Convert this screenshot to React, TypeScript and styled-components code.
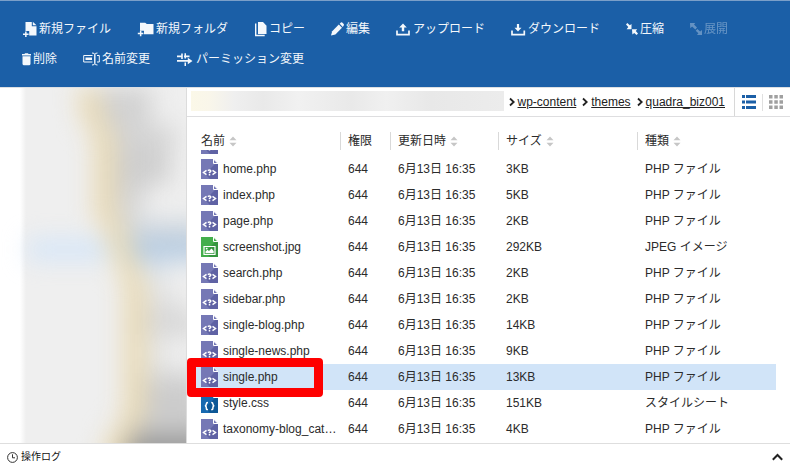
import React from "react";
import styled, { createGlobalStyle } from "styled-components";

const GlobalStyle = createGlobalStyle`
  * { box-sizing: border-box; }
  body {
    margin: 0;
    background: #fff;
    color: #2b2b2b;
    font-family: "Liberation Sans", "Noto Sans CJK JP", sans-serif;
    font-size: 12px;
    line-height: 18px;
  }
  button { font: inherit; color: inherit; background: none; border: 0; padding: 0; cursor: pointer; }
`;

const Page = styled.div`
  display: flex;
  flex-direction: column;
  height: 100vh;
  overflow: hidden;
`;

/* ---------- toolbar ---------- */

const Toolbar = styled.div`
  display: flex;
  flex-wrap: wrap;
  align-items: center;
  gap: 12px 26px;
  padding: 19px 22px;
  background: #1b5fa7;
  border-top: 1px solid #7b9fc9;
  color: #f4f8fc;
`;

const ToolButton = styled.button`
  display: flex;
  align-items: center;
  gap: 2px;
  height: 18px;
  white-space: nowrap;
  &:disabled { opacity: 0.32; color: #fff; cursor: default; }
`;

const ToolIcon = styled.svg`
  flex: none;
  display: block;
`;

type IconProps = { w: number; h?: number; children: React.ReactNode };
const Icon = ({ w, h = 16, children }: IconProps) => (
  <ToolIcon width={w} height={h} viewBox={`0 0 ${w} ${h}`} fill="currentColor" aria-hidden="true">
    {children}
  </ToolIcon>
);

const NewFileIcon = () => (
  <Icon w={15}>
    <path d="M3.500 1H9.800V5.200H14.500V14.500H7.200V10H3.500z" />
    <path d="M10.800.800 14.500 4.300H10.800z" />
    <path d="M3.100 10.500h1.500v2H6.600V14H4.600v2H3.100V14H1v-1.500h2.100z" />
  </Icon>
);
const NewFolderIcon = () => (
  <Icon w={17}>
    <path d="M3 1.700H8.200L9.800 3H16.500V13.300H7V9.800H3z" />
    <path d="M2.900 9.700h1.500v2H6.400v1.500h-2v2H2.900v-2H.800v-1.500h2.100z" />
  </Icon>
);
const CopyIcon = () => (
  <Icon w={13}>
    <path d="M4 1H9L12.500 4.700V13H4z" />
    <path d="M1.700 2.500v12h9" fill="none" stroke="currentColor" strokeWidth="1.400" />
  </Icon>
);
const EditIcon = () => (
  <Icon w={13}>
    <path d="M0 14.500 1.200 10.200 7.800 3.600 11 6.800 4.400 13.400z" />
    <path d="M8.700 2.800 9.900 1.600Q10.700 1 11.500 1.700L12.700 2.900Q13.300 3.700 12.700 4.500L11.800 5.900z" />
  </Icon>
);
const UploadIcon = () => (
  <Icon w={15}>
    <path d="M7 2.500 10.800 6.500H8.200V10.300H5.800V6.500H3.200z" />
    <path d="M1 9.500v4.200h12V9.500" fill="none" stroke="currentColor" strokeWidth="1.700" />
  </Icon>
);
const DownloadIcon = () => (
  <Icon w={15}>
    <path d="M7 10.500 10.500 6.800H8.100V3H5.900V6.800H3.500z" />
    <path d="M1 9.500v4.200h12.300V9.500" fill="none" stroke="currentColor" strokeWidth="1.700" />
  </Icon>
);
const CompressIcon = () => (
  <Icon w={12}>
    <path d="M0 3.500 1.300 2 3.800 4.200 5.500 3V8.200H.600L2.300 6z" />
    <path d="M6 8.200h5.200L9.800 10 12 12.600 10.600 14 8.200 12 6.400 13.600z" />
  </Icon>
);
const ExpandIcon = () => (
  <Icon w={12}>
    <path d="M0 2h5.200L4 3.600 7 6.500 5.300 8.400 2.100 5.500.300 7.300z" />
    <path d="M12 14H7l1.400-1.700-2.700-2.500 1.700-1.800 2.700 2.600L12 9z" />
  </Icon>
);
const TrashIcon = () => (
  <Icon w={9}>
    <path d="M3 2.200h3l.500.800H9v1.500H0V3h2.500z" />
    <path d="M.500 5.200h8V12.800Q8.400 14.300 7 14.300H2Q.600 14.300 .500 12.800z" />
  </Icon>
);
const RenameIcon = () => (
  <Icon w={17}>
    <path d="M9.500 4.500H.700v6.500h8.800M14 4.500h2.300v6.500H14" fill="none" stroke="currentColor" strokeWidth="1" />
    <path d="M2.500 6.500h6.500v2.500h-6.500z" />
    <path d="M9 2Q11.800 2 11.800 3.500v9Q11.800 14 9 14M14.500 2Q11.800 2 11.800 3.500v9Q11.800 14 14.500 14" fill="none" stroke="currentColor" strokeWidth="1" />
  </Icon>
);
const PermissionIcon = () => (
  <Icon w={18}>
    <path d="M1 4.600H5.200V2.500H6.800V8H5.200V6.200H1zM8 4.600H13.500V6.200H8zM8.500 2.200H10V7.500H8.500zM8.500 11.500H10V15H8.500z" />
    <path d="M1 9H11.800V6.800L16.500 10 11.800 13.300V10.800H1z" />
  </Icon>
);

const tools: { label: string; icon: React.ReactNode; disabled?: boolean }[] = [
  { label: "新規ファイル", icon: <NewFileIcon /> },
  { label: "新規フォルダ", icon: <NewFolderIcon /> },
  { label: "コピー", icon: <CopyIcon /> },
  { label: "編集", icon: <EditIcon /> },
  { label: "アップロード", icon: <UploadIcon /> },
  { label: "ダウンロード", icon: <DownloadIcon /> },
  { label: "圧縮", icon: <CompressIcon /> },
  { label: "展開", icon: <ExpandIcon />, disabled: true },
  { label: "削除", icon: <TrashIcon /> },
  { label: "名前変更", icon: <RenameIcon /> },
  { label: "パーミッション変更", icon: <PermissionIcon /> },
];

/* ---------- blurred folder tree ---------- */

const Body = styled.div`
  flex: 1;
  min-height: 0;
  display: flex;
  border-top: 1px solid #dcdfe3;
`;

const Sidebar = styled.aside`
  flex: none;
  width: 187px;
  padding-left: 20px;
  border-right: 1px solid #dcdcdc;
  overflow: hidden;
`;

const TreePanel = styled.div`
  height: 100%;
  background: linear-gradient(to right, #fff, #efefef 6px);
`;

const Tree = styled.div`
  width: 200px;
  filter: blur(12px);
`;

const TreeRow = styled.div<{ $indent: number; $active?: boolean }>`
  display: flex;
  height: 19px;
  padding-left: ${(p) => p.$indent}px;
  background: ${(p) =>
    p.$active ? "linear-gradient(to right, transparent 8px, #d3e5f9 8px)" : "transparent"};
`;

const TreeFolder = styled.span`
  width: 22px;
  background: #e9dab4;
`;

const TreeLabel = styled.span<{ $width: number; $tone: string }>`
  width: ${(p) => p.$width}px;
  background: ${(p) => p.$tone};
`;

const tree: { indent: number; width: number; tone: string; active?: boolean }[] = [
  { indent: 58, width: 52, tone: "#d0d0d0" },
  { indent: 62, width: 46, tone: "#d2d2d2" },
  { indent: 72, width: 62, tone: "#d4d4d4" },
  { indent: 74, width: 54, tone: "#d0d0d0" },
  { indent: 74, width: 54, tone: "#cdcdcd" },
  { indent: 74, width: 30, tone: "#d2d2d2" },
  { indent: 74, width: 24, tone: "#d6d6d6" },
  { indent: 84, width: 80, tone: "#cdd5dd" },
  { indent: 90, width: 80, tone: "#b2cae2", active: true },
  { indent: 98, width: 30, tone: "#dde3ea" },
  { indent: 104, width: 20, tone: "#e4e4e4" },
  { indent: 104, width: 36, tone: "#dddddd" },
  { indent: 104, width: 60, tone: "#d5d5d5" },
  { indent: 104, width: 20, tone: "#e4e4e4" },
  { indent: 104, width: 20, tone: "#e4e4e4" },
  { indent: 104, width: 60, tone: "#cfcfcf" },
  { indent: 104, width: 60, tone: "#cacaca" },
  { indent: 100, width: 70, tone: "#cfcfcf" },
  { indent: 88, width: 90, tone: "#a8a8a8" },
  { indent: 82, width: 90, tone: "#8c8c8c" },
];

/* ---------- main pane ---------- */

const Main = styled.main`
  flex: 1;
  min-width: 0;
  overflow: hidden;
`;

const PathBar = styled.div`
  display: flex;
  align-items: stretch;
  height: 29px;
  border-bottom: 1px solid #dedee0;
`;

const HiddenPath = styled.div`
  flex: 1;
  margin: 3px 0 5px 4px;
  background: linear-gradient(to right, #fbf8e8, #f9f6ea 18px, #efefef 44px, #e9e9e9 72px, #f1f1f1 108px, #e9e9e9 160px, #f0f0f0 195px, #e8e8e8 240px, #ececec);
`;

const Crumbs = styled.nav`
  display: flex;
  align-items: center;
  gap: 6px;
  padding: 0 9px 1px 5px;
`;

const Crumb = styled.span`
  display: flex;
  align-items: center;
  gap: 3px;
  a { color: #222; text-underline-offset: 1px; }
`;

const Views = styled.div`
  display: flex;
  align-items: center;
  border-left: 1px solid #d8d8d8;
  padding: 0 7px;
`;

const ViewButton = styled.button`
  display: flex;
  color: ${(p) => (p["aria-pressed"] ? "#1b5fa7" : "#a0a0a0")};
`;

const ViewDivider = styled.span`
  width: 1px;
  height: 17px;
  margin: 0 6px;
  background: #e0e0e0;
`;

/* ---------- file table ---------- */

const TableWrap = styled.div`
  padding: 15px 14px 0 0;
`;

const Table = styled.table`
  width: 100%;
  table-layout: fixed;
  border-collapse: separate;
  border-spacing: 0;
`;

const Col = styled.col<{ $w?: number }>`
  width: ${(p) => (p.$w ? `${p.$w}px` : "auto")};
`;

const Th = styled.th`
  height: 18px;
  padding: 0 0 0 7px;
  text-align: left;
  font-weight: 400;
  border-left: 1px solid #d9d9d9;
  &:first-child { padding-left: 14px; border-left: 0; }
`;

const SortButton = styled.button`
  display: flex;
  align-items: center;
  gap: 4px;
  height: 18px;
`;

const Row = styled.tr<{ $selected?: boolean }>`
  background: ${(p) => (p.$selected ? "#d1e4f8" : "transparent")};
`;

const Td = styled.td`
  height: 26px;
  padding: 0 0 0 8px;
  white-space: nowrap;
`;

const NameTd = styled(Td)`
  position: relative;
  padding-left: 14px;
`;

const Name = styled.span`
  display: flex;
  align-items: center;
  gap: 5px;
`;

const ClippedCell = styled.td`
  padding: 0 0 0 14px;
`;

const Clip = styled.div`
  display: flex;
  align-items: flex-end;
  height: 6px;
  padding-bottom: 2px;
  overflow: hidden;
  clip-path: inset(0);
`;

const Highlight = styled.span`
  position: absolute;
  z-index: 1;
  top: -6px;
  bottom: -7px;
  left: 0;
  width: 136px;
  border: 9px solid #fe0000;
  border-radius: 4px;
  pointer-events: none;
`;

type Kind = "php" | "jpg" | "css";
const kindColors: Record<Kind, [string, string]> = {
  php: ["#7578b5", "#5f62a4"],
  jpg: ["#43ae4b", "#36963f"],
  css: ["#1769b0", "#0d5796"],
};

const FileSvg = styled.svg`
  flex: none;
  display: block;
`;

const FileIcon = ({ kind }: { kind: Kind }) => {
  const [base, shade] = kindColors[kind];
  return (
    <FileSvg width="17" height="20" viewBox="0 0 17 20" aria-hidden="true">
      <path d="M0 0H12L17 5V20H0z" fill={base} />
      <path d="M17 5V20H9L4 15 14 5z" fill={shade} />
      <path d="M12.500 0V4.500H17z" fill={base} stroke="#fff" strokeWidth="1" />
      {kind === "php" && (
        <g fill="none" stroke="#fff" strokeWidth="1.500">
          <path d="M5.500 11.300 2.500 13.500 5.500 15.700M11.500 11.300 14.500 13.500 11.500 15.700" />
          <path d="M6.900 11.600Q8.500 10.300 9.700 11.500 10.200 12.500 8.500 13.500V14.200M8.500 15V16.500" />
        </g>
      )}
      {kind === "css" && (
        <g fill="none" stroke="#fff" strokeWidth="1.500">
          <path d="M7 9.500Q5.300 9.500 5.300 11T4 13Q5.300 13 5.300 15T7 16.500" />
          <path d="M10.200 9.500Q11.900 9.500 11.900 11T13.200 13Q11.900 13 11.900 15T10.200 16.500" />
        </g>
      )}
      {kind === "jpg" && (
        <g>
          <path d="M3 9.500H14V17.500H3z" fill="none" stroke="#fff" strokeWidth="1.200" />
          <path d="M4.500 16.200V14.500L6.500 12.700 8 14 10.500 11.500 12.700 14V16.200z" fill="#fff" />
          <circle cx="5.700" cy="11.600" r=".9" fill="#fff" />
        </g>
      )}
    </FileSvg>
  );
};

const SortMark = () => (
  <svg width="8" height="11" viewBox="0 0 8 11" fill="#c6c6c6" aria-hidden="true">
    <path d="M4 .500 7.500 4.300H.500zM4 10.500.500 6.700H7.500z" />
  </svg>
);

const files: { name: string; size: string; type: string; kind: Kind; selected?: boolean }[] = [
  { name: "home.php", size: "3KB", type: "PHP ファイル", kind: "php" },
  { name: "index.php", size: "5KB", type: "PHP ファイル", kind: "php" },
  { name: "page.php", size: "2KB", type: "PHP ファイル", kind: "php" },
  { name: "screenshot.jpg", size: "292KB", type: "JPEG イメージ", kind: "jpg" },
  { name: "search.php", size: "2KB", type: "PHP ファイル", kind: "php" },
  { name: "sidebar.php", size: "2KB", type: "PHP ファイル", kind: "php" },
  { name: "single-blog.php", size: "14KB", type: "PHP ファイル", kind: "php" },
  { name: "single-news.php", size: "9KB", type: "PHP ファイル", kind: "php" },
  { name: "single.php", size: "13KB", type: "PHP ファイル", kind: "php", selected: true },
  { name: "style.css", size: "151KB", type: "スタイルシート", kind: "css" },
  { name: "taxonomy-blog_cat…", size: "4KB", type: "PHP ファイル", kind: "php" },
];

const columns: { label: string; width?: number; sortable: boolean }[] = [
  { label: "名前", width: 153, sortable: true },
  { label: "権限", width: 50, sortable: false },
  { label: "更新日時", width: 108, sortable: true },
  { label: "サイズ", width: 139, sortable: true },
  { label: "種類", sortable: true },
];

/* ---------- footer ---------- */

const Footer = styled.footer`
  flex: none;
  display: flex;
  align-items: center;
  justify-content: space-between;
  height: 27px;
  padding: 0 7px;
  border-top: 1px solid #dedede;
  background: #fff;
`;

const LogTitle = styled.div`
  display: flex;
  align-items: center;
  gap: 3px;
  color: #111;
  font-size: 10px;
`;

const ToggleButton = styled.button`
  display: flex;
`;

export default function App() {
  return (
    <Page>
      <GlobalStyle />
      <Toolbar role="toolbar">
        {tools.map((t) => (
          <ToolButton key={t.label} type="button" disabled={t.disabled}>
            {t.icon}
            {t.label}
          </ToolButton>
        ))}
      </Toolbar>
      <Body>
        <Sidebar>
          <TreePanel>
            <Tree aria-hidden="true">
              {tree.map((r, i) => (
                <TreeRow key={i} $indent={r.indent} $active={r.active}>
                  <TreeFolder />
                  <TreeLabel $width={r.width} $tone={r.tone} />
                </TreeRow>
              ))}
            </Tree>
          </TreePanel>
        </Sidebar>
        <Main>
          <PathBar>
            <HiddenPath />
            <Crumbs>
              {["wp-content", "themes", "quadra_biz001"].map((c) => (
                <Crumb key={c}>
                  <svg width="6" height="10" viewBox="0 0 6 10" fill="none" stroke="#222" strokeWidth="1.800" aria-hidden="true">
                    <path d="M1 1.500 4.700 5 1 8.500" />
                  </svg>
                  <a href="#">{c}</a>
                </Crumb>
              ))}
            </Crumbs>
            <Views>
              <ViewButton type="button" aria-pressed={true} aria-label="リスト表示">
                <svg width="14" height="14" viewBox="0 0 14 14" fill="currentColor">
                  <path d="M0 0h3v3H0zM4 0h10v3H4zM0 5.500h3v3H0zM4 5.500h10v3H4zM0 11h3v3H0zM4 11h10v3H4z" />
                </svg>
              </ViewButton>
              <ViewDivider />
              <ViewButton type="button" aria-pressed={false} aria-label="アイコン表示">
                <svg width="14" height="14" viewBox="0 0 14 14" fill="currentColor">
                  <path d="M0 0h3.500v3.500H0zM5.300 0h3.500v3.500H5.300zM10.500 0H14v3.500H10.500zM0 5.300h3.500v3.500H0zM5.300 5.300h3.500v3.500H5.300zM10.500 5.300H14v3.500H10.500zM0 10.500h3.500V14H0zM5.300 10.500h3.500V14H5.300zM10.500 10.500H14V14H10.500z" />
                </svg>
              </ViewButton>
            </Views>
          </PathBar>
          <TableWrap>
            <Table>
              <colgroup>
                {columns.map((c) => (
                  <Col key={c.label} $w={c.width} />
                ))}
              </colgroup>
              <thead>
                <tr>
                  {columns.map((c) => (
                    <Th key={c.label} scope="col">
                      {c.sortable ? (
                        <SortButton type="button">
                          {c.label}
                          <SortMark />
                        </SortButton>
                      ) : (
                        c.label
                      )}
                    </Th>
                  ))}
                </tr>
              </thead>
              <tbody>
                <tr aria-hidden="true">
                  <ClippedCell colSpan={5}>
                    <Clip>
                      <FileIcon kind="php" />
                    </Clip>
                  </ClippedCell>
                </tr>
                {files.map((f) => (
                  <Row key={f.name} $selected={f.selected}>
                    <NameTd>
                      <Name>
                        <FileIcon kind={f.kind} />
                        {f.name}
                      </Name>
                      {f.selected && <Highlight />}
                    </NameTd>
                    <Td>644</Td>
                    <Td>6月13日 16:35</Td>
                    <Td>{f.size}</Td>
                    <Td>{f.type}</Td>
                  </Row>
                ))}
              </tbody>
            </Table>
          </TableWrap>
        </Main>
      </Body>
      <Footer>
        <LogTitle>
          <svg width="11" height="11" viewBox="0 0 11 11" fill="none" stroke="#333" aria-hidden="true">
            <circle cx="5.500" cy="5.500" r="4.900" />
            <path d="M5.500 2.300V5.800H8" />
          </svg>
          操作ログ
        </LogTitle>
        <ToggleButton type="button" aria-label="操作ログを開く">
          <svg width="11" height="8" viewBox="0 0 11 8" fill="none" stroke="#222" strokeWidth="2" aria-hidden="true">
            <path d="M.800 6.800 5.500 2 10.200 6.800" />
          </svg>
        </ToggleButton>
      </Footer>
    </Page>
  );
}
